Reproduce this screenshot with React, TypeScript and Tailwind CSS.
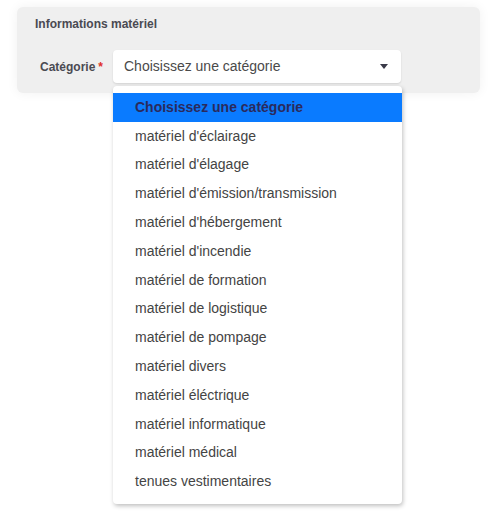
import React from "react";

const options = [
  "Choisissez une catégorie",
  "matériel d'éclairage",
  "matériel d'élagage",
  "matériel d'émission/transmission",
  "matériel d'hébergement",
  "matériel d'incendie",
  "matériel de formation",
  "matériel de logistique",
  "matériel de pompage",
  "matériel divers",
  "matériel éléctrique",
  "matériel informatique",
  "matériel médical",
  "tenues vestimentaires",
];

export default function App() {
  return (
    <div className="min-h-[511px] w-[495px] bg-white pt-[7px] pl-[17px] font-['Liberation_Sans',Arial,sans-serif]">
      <div className="relative h-[86px] w-[463px] rounded-md bg-[#efefef] shadow-[0_0_12px_rgba(0,0,0,0.06)]">
        <div className="pl-[18px] pt-[8px] text-[12px] font-bold text-[#4a4a52]">
          Informations matériel
        </div>
        <div className="mt-[17px] flex items-center">
          <div className="w-[96px] pl-[23px] text-[12px] font-bold text-[#4a4a52]">
            Catégorie<span className="ml-[3px] text-[#e0302a]">*</span>
          </div>
          <div className="flex h-[33px] w-[288px] items-center justify-between rounded-[4px] bg-white pl-[11px] pr-[13px] shadow-[0_1px_2px_rgba(0,0,0,0.12)]">
            <span className="text-[14px] text-[#4a4a4a]">Choisissez une catégorie</span>
            <svg width="8" height="5" viewBox="0 0 8 5">
              <path d="M0 0h8L4 5z" fill="#3a3a48" />
            </svg>
          </div>
        </div>

        <div className="absolute left-[96px] top-[79px] z-10 w-[289px] rounded-[4px] bg-white pt-[7px] pb-[8px] shadow-[1px_2px_4px_rgba(0,0,0,0.25)]">
          {options.map((o, i) => (
            <div
              key={o}
              className={
                i === 0
                  ? "flex h-[28.8px] items-center bg-[#0a7bff] pl-[22px] text-[14px] font-bold text-[#2b2a5c]"
                  : "flex h-[28.8px] items-center pl-[22px] text-[14px] text-[#444]"
              }
            >
              {o}
            </div>
          ))}
        </div>
      </div>
    </div>
  );
}
